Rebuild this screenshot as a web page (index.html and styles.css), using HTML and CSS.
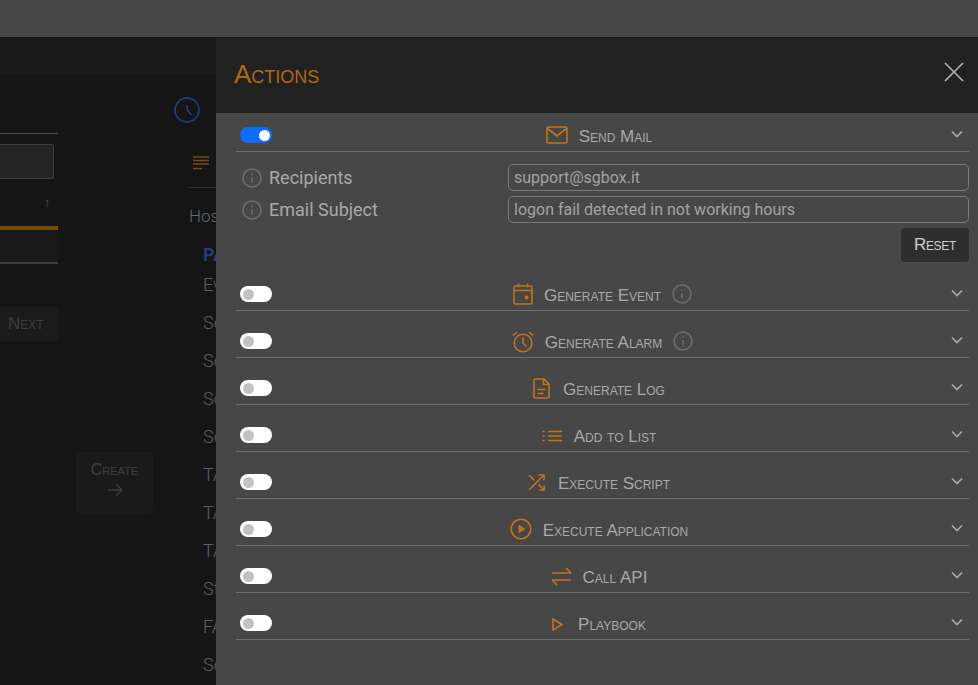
FILE: index.html
```html
<!DOCTYPE html>
<html lang="en">
<head>
<meta charset="utf-8">
<title>Actions</title>
<link rel="stylesheet" href="styles.css">
</head>
<body>
<div class="topbar"></div>
<div class="stage">
  <div class="subbar"></div>
  <div class="backdrop">
    <div class="wizard">
      <div class="wizard-rule"></div>
      <div class="wizard-input"></div>
      <div class="wizard-sort">↑</div>
      <div class="wizard-accent"></div>
      <div class="wizard-row"></div>
      <div class="wizard-next">Next</div>
    </div>
    <div class="create-col">
      <div class="create"><span>Create</span><svg class="create-arrow" viewBox="0 0 16 14" width="16" height="14"><path d="M1 7h14M9 1l6 6-6 6"/></svg></div>
    </div>
    <div class="side">
      <svg class="side-clock" viewBox="0 0 26 26" width="26" height="26"><circle cx="13" cy="13" r="12"/><path d="M13 8v4.500l4.500 5.500"/></svg>
      <svg class="side-lines" viewBox="0 0 16 14" width="16" height="14"><path d="M0 1h16M0 4.500h16M0 8h16M0 12.500h9"/></svg>
      <div class="side-rule"></div>
      <div class="side-host">Host</div>
      <ul class="side-list">
        <li class="side-active">PA</li>
        <li>Event</li><li>Source</li><li>Source</li><li>Source</li><li>Source</li>
        <li>TAG</li><li>TAG</li><li>TAG</li><li>State</li><li>FAIL</li><li>Source</li>
      </ul>
    </div>
  </div>
</div>
<aside class="drawer">
  <header class="drawer-head">
    <h1 class="drawer-title">Actions</h1>
    <svg class="drawer-close" viewBox="0 0 20 20" width="20" height="20"><path d="M1 1l18 18M19 1L1 19"/></svg>
  </header>
  <div class="drawer-body">
    <section class="action action-first">
      <span class="toggle toggle-on"></span>
      <div class="action-title">
        <svg class="ic" viewBox="0 0 22 18" width="22" height="18"><rect x="1" y="1" width="20" height="16" rx="1.500"/><path d="M1.500 2.500L11 10l9.500-7.500"/></svg>
        <span>Send Mail</span>
      </div>
      <svg class="chev" viewBox="0 0 12 8" width="12" height="8"><path d="M1 1.500l5 5 5-5"/></svg>
    </section>
    <div class="details">
      <div class="field">
        <label class="field-label"><svg class="info" viewBox="0 0 20 20" width="20" height="20"><circle cx="10" cy="10" r="9"/><path d="M10 9v5.500M10 5.600v1.400"/></svg>Recipients</label>
        <div class="field-input">support@sgbox.it</div>
      </div>
      <div class="field">
        <label class="field-label"><svg class="info" viewBox="0 0 20 20" width="20" height="20"><circle cx="10" cy="10" r="9"/><path d="M10 9v5.500M10 5.600v1.400"/></svg>Email Subject</label>
        <div class="field-input">logon fail detected in not working hours</div>
      </div>
      <div class="details-foot"><button class="reset" type="button">Reset</button></div>
    </div>
    <section class="action">
      <span class="toggle"></span>
      <div class="action-title title-info">
        <svg class="ic" viewBox="0 0 20 22" width="20" height="22"><rect x="1" y="3" width="18" height="18" rx="1.500"/><path d="M1 7.500h18M5.500 0.500v4M14.500 0.500v4"/><circle class="ic-fill" cx="13.500" cy="14.500" r="2"/></svg>
        <span>Generate Event</span>
        <svg class="info" viewBox="0 0 20 20" width="20" height="20"><circle cx="10" cy="10" r="9"/><path d="M10 9v5.500M10 5.600v1.400"/></svg>
      </div>
      <svg class="chev" viewBox="0 0 12 8" width="12" height="8"><path d="M1 1.500l5 5 5-5"/></svg>
    </section>
    <section class="action">
      <span class="toggle"></span>
      <div class="action-title title-info">
        <svg class="ic ic-low" viewBox="0 0 22 22" width="22" height="22"><circle cx="11" cy="12" r="8.800"/><path d="M11 6.500V12l3.500 3.500M1 4.500L5 1M21 4.500L17 1"/></svg>
        <span>Generate Alarm</span>
        <svg class="info" viewBox="0 0 20 20" width="20" height="20"><circle cx="10" cy="10" r="9"/><path d="M10 9v5.500M10 5.600v1.400"/></svg>
      </div>
      <svg class="chev" viewBox="0 0 12 8" width="12" height="8"><path d="M1 1.500l5 5 5-5"/></svg>
    </section>
    <section class="action">
      <span class="toggle"></span>
      <div class="action-title">
        <svg class="ic" viewBox="0 0 17 21" width="17" height="21"><path d="M1 2.500A1.500 1.500 0 0 1 2.500 1H11l5 5v12.500a1.500 1.500 0 0 1-1.500 1.500h-12A1.500 1.500 0 0 1 1 18.500zM10.500 1v5.500H16M4.500 11.500h8M4.500 15.500h6"/></svg>
        <span class="gap-13">Generate Log</span>
      </div>
      <svg class="chev" viewBox="0 0 12 8" width="12" height="8"><path d="M1 1.500l5 5 5-5"/></svg>
    </section>
    <section class="action">
      <span class="toggle"></span>
      <div class="action-title">
        <svg class="ic ic-low" viewBox="0 0 20 12" width="20" height="12"><path d="M6 1.500h14M6 6h14M6 10.500h14M0.500 1.500h2M0.500 6h2M0.500 10.500h2"/></svg>
        <span class="gap-12">Add to List</span>
      </div>
      <svg class="chev" viewBox="0 0 12 8" width="12" height="8"><path d="M1 1.500l5 5 5-5"/></svg>
    </section>
    <section class="action">
      <span class="toggle"></span>
      <div class="action-title">
        <svg class="ic" viewBox="0 0 18 18" width="17" height="17"><path d="M1 17L17 1M11 1h6v6M1 1l5.500 5.500M11 11l6 6M17 12v5h-5"/></svg>
        <span class="gap-13">Execute Script</span>
      </div>
      <svg class="chev" viewBox="0 0 12 8" width="12" height="8"><path d="M1 1.500l5 5 5-5"/></svg>
    </section>
    <section class="action">
      <span class="toggle"></span>
      <div class="action-title">
        <svg class="ic" viewBox="0 0 22 22" width="22" height="22"><circle cx="11" cy="11" r="9.800"/><path class="ic-fill" d="M8.500 6.500L15.500 11l-7 4.500z"/></svg>
        <span>Execute Application</span>
      </div>
      <svg class="chev" viewBox="0 0 12 8" width="12" height="8"><path d="M1 1.500l5 5 5-5"/></svg>
    </section>
    <section class="action">
      <span class="toggle"></span>
      <div class="action-title">
        <svg class="ic" viewBox="0 0 21 19" width="21" height="19"><path d="M1 6h19M15 1l5 5M20 13H1M6 18l-5-5"/></svg>
        <span>Call API</span>
      </div>
      <svg class="chev" viewBox="0 0 12 8" width="12" height="8"><path d="M1 1.500l5 5 5-5"/></svg>
    </section>
    <section class="action">
      <span class="toggle"></span>
      <div class="action-title">
        <svg class="ic ic-low" viewBox="0 0 11 13" width="11" height="13"><path d="M1 1l9 5.500-9 5.500z"/></svg>
        <span class="gap-15">Playbook</span>
      </div>
      <svg class="chev" viewBox="0 0 12 8" width="12" height="8"><path d="M1 1.500l5 5 5-5"/></svg>
    </section>
  </div>
</aside>
</body>
</html>
```

FILE: styles.css
```css
* { box-sizing: border-box; }
html, body { margin: 0; height: 100%; }
body {
  position: relative;
  width: 978px;
  height: 685px;
  overflow: hidden;
  background: #151515;
  font-family: Roboto, sans-serif;
  display: flex;
  flex-direction: column;
}
.topbar { height: 37px; flex: none; background: #474747; }
.stage { flex: 1; display: flex; flex-direction: column; min-height: 0; }
.subbar { height: 37px; flex: none; background: #1a1a1a; }
.backdrop { flex: 1; display: flex; min-height: 0; overflow: hidden; }

.wizard { width: 58px; flex: none; margin-right: 18px; padding-top: 59px; display: flex; flex-direction: column; align-items: flex-start; }
.wizard-rule { width: 58px; height: 1px; background: #4a4a4a; }
.wizard-input { width: 54px; height: 35px; margin-top: 10px; background: #242424; border: 1px solid #3d3d3d; border-left: 0; border-radius: 0 3px 3px 0; }
.wizard-sort { width: 50px; height: 47px; padding-top: 17px; text-align: right; font-size: 12px; line-height: 14px; color: #555; }
.wizard-accent { width: 58px; height: 4px; background: #7a4a08; }
.wizard-row { width: 58px; height: 34px; background: #191919; border-bottom: 2px solid #3f3f3f; }
.wizard-next { width: 58px; height: 34px; margin-top: 43px; padding-left: 8px; background: #1b1b1b; border-radius: 3px; color: #3d3d3d; font: small-caps 17px/33px "Liberation Sans", sans-serif; }

.create-col { width: 96px; flex: none; padding-top: 378px; }
.create { width: 77px; height: 62px; padding-top: 8px; border-radius: 4px; background: #1a1a1a; color: #3d3d3d; font: small-caps 16px/20px "Liberation Sans", sans-serif; display: flex; flex-direction: column; align-items: center; }
.create-arrow { margin-top: 3px; fill: none; stroke: #3d3d3d; stroke-width: 1.300; }

.side { flex: 1; padding-left: 17px; min-width: 0; }
.side-clock { display: block; margin: 23px 0 0 -15px; fill: none; stroke: #22387a; stroke-width: 1.800; }
.side-lines { display: block; margin: 33px 0 0 4px; fill: none; stroke: #7a4a08; stroke-width: 1.300; }
.side-rule { height: 1px; margin-top: 17px; background: #2c2c2c; }
.side-host { margin-top: 16px; font-size: 17px; line-height: 24px; font-weight: 300; color: #5f6a75; }
.side-list { list-style: none; margin: 12px 0 0; padding: 0 0 0 14px; }
.side-list li { height: 38px; font-size: 18px; line-height: 30px; font-weight: 300; color: #5a5f66; white-space: nowrap; }
.side-list .side-active { height: 30px; font-weight: 700; color: #24397f; }

.drawer { position: absolute; left: 216px; right: 0; top: 38px; bottom: 0; display: flex; flex-direction: column; background: #474747; }
.drawer-head { height: 75px; flex: none; display: flex; align-items: center; justify-content: space-between; padding: 0 14px 0 18px; background: #212121; }
.drawer-title { margin: 0 0 4px; font: small-caps 400 26px/30px "Liberation Sans", sans-serif; color: #b1690f; }
.drawer-close { fill: none; stroke: #b0b0b0; stroke-width: 1.700; margin-top: -8px; }
.drawer-body { flex: 1; padding: 0 9px 0 20px; }

.action { display: grid; grid-template-columns: 44px 1fr 51px; align-items: center; padding: 22px 0 8px; border-bottom: 1px solid #6e6e6e; }
.action-first { padding-top: 14px; }
.toggle { position: relative; display: block; width: 32px; height: 16px; margin-left: 4px; border-radius: 8px; background: #fff; }
.toggle::after { content: ""; position: absolute; left: 2.500px; top: 2.500px; width: 11px; height: 11px; border-radius: 50%; background: #c2c2c2; }
.toggle-on { background: #0d6efd; }
.toggle-on::after { left: auto; right: 2.500px; background: #fff; }
.action-title { display: flex; justify-content: center; align-items: center; gap: 11px; height: 16px; font: small-caps 400 17px/16px "Liberation Sans", sans-serif; color: #a9a9a9; white-space: nowrap; }
.title-info { padding-left: 7px; }
.action-title span { padding-top: 3px; }
.ic { flex: none; fill: none; stroke: #c4731a; stroke-width: 1.600; }
.ic-low { margin-top: 2px; }
.ic .ic-fill { fill: #c4731a; stroke: none; }
.gap-12 { margin-left: 1px; }
.gap-13 { margin-left: 2px; }
.gap-15 { margin-left: 4px; }
.chev { justify-self: end; margin-right: 6px; margin-top: -2px; fill: none; stroke: #a9a9a9; stroke-width: 1.700; }
.info { flex: none; fill: none; stroke: #6d6d6d; stroke-width: 1.500; }

.details { padding: 12px 0 2px; }
.field { display: flex; align-items: center; height: 27px; margin-bottom: 5px; }
.field-label { width: 272px; flex: none; display: flex; align-items: center; gap: 7px; padding-left: 6px; font-size: 18px; color: #a9a9a9; }
.field-input { flex: 1; height: 27px; padding: 0 5px; border: 1px solid #7a7a7a; border-radius: 5px; font-size: 16px; line-height: 25px; color: #a3a3a3; }
.details-foot { display: flex; justify-content: flex-end; }
.reset { width: 68px; height: 34px; padding: 0; border: 0; border-radius: 4px; background: #2e2e2e; color: #cfcfcf; font: small-caps 17px/34px "Liberation Sans", sans-serif; letter-spacing: -0.300px; }
```
